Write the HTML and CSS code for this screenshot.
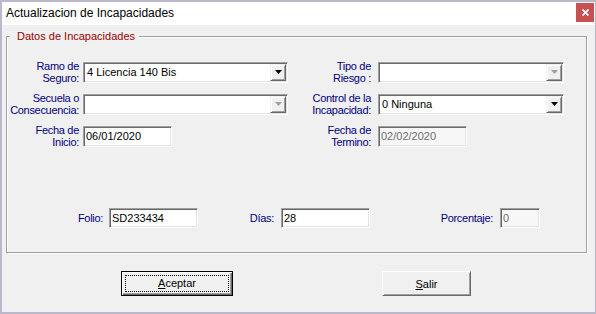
FILE: index.html
```html
<!DOCTYPE html>
<html lang="es">
<head>
    <meta charset="UTF-8">
    <title>Actualizacion de Incapacidades</title>
    <link rel="stylesheet" href="styles.css">
</head>
<body>
<div class="window">
    <div class="titlebar">
        <span class="title">Actualizacion de Incapacidades</span>
        <button class="close" type="button">
            <svg width="7" height="7" viewBox="0 0 7 7"><path d="M0.5 0.5L6.5 6.5M6.5 0.5L0.5 6.5" stroke="#fff" stroke-width="1.8"/></svg>
        </button>
    </div>
    <div class="client">
        <fieldset class="group">
            <legend>Datos de Incapacidades</legend>
            <div class="fields">
                <label class="lbl">Ramo de<br>Seguro:</label>
                <div class="combo">
                    <span class="combo-text">4 Licencia 140 Bis</span>
                    <span class="drop"><svg width="7" height="4" viewBox="0 0 7 4"><polygon points="0,0 7,0 3.5,4" fill="#000"/></svg></span>
                </div>
                <label class="lbl lbl-r">Tipo de<br>Riesgo :</label>
                <div class="combo disabled">
                    <span class="combo-text"></span>
                    <span class="drop"><svg width="7" height="4" viewBox="0 0 7 4"><polygon points="0,0 7,0 3.5,4" fill="#a0a0a0"/></svg></span>
                </div>

                <label class="lbl">Secuela o<br>Consecuencia:</label>
                <div class="combo disabled">
                    <span class="combo-text"></span>
                    <span class="drop"><svg width="7" height="4" viewBox="0 0 7 4"><polygon points="0,0 7,0 3.5,4" fill="#a0a0a0"/></svg></span>
                </div>
                <label class="lbl lbl-r">Control de la<br>Incapacidad:</label>
                <div class="combo">
                    <span class="combo-text">0 Ninguna</span>
                    <span class="drop"><svg width="7" height="4" viewBox="0 0 7 4"><polygon points="0,0 7,0 3.5,4" fill="#000"/></svg></span>
                </div>

                <label class="lbl">Fecha de<br>Inicio:</label>
                <input class="textbox" type="text" value="06/01/2020">
                <label class="lbl lbl-r">Fecha de<br>Termino:</label>
                <input class="textbox" type="text" value="02/02/2020" disabled>
            </div>
            <div class="totals">
                <label class="lbl lbl-folio">Folio:</label>
                <input class="textbox short" type="text" value="SD233434">
                <label class="lbl lbl-dias">Días:</label>
                <input class="textbox short" type="text" value="28">
                <label class="lbl lbl-pct">Porcentaje:</label>
                <input class="textbox short tiny" type="text" value="0" disabled>
            </div>
        </fieldset>
        <div class="actions">
            <button class="btn btn-default" type="button"><span class="focus"><u>A</u>ceptar</span></button>
            <button class="btn btn-salir" type="button"><u>S</u>alir</button>
        </div>
    </div>
</div>
</body>
</html>
```

FILE: styles.css
```css
*{
    margin:0;
    padding:0;
    box-sizing:border-box;
}
body{
    background:#fff;
    font-family:"Liberation Sans", Arial, sans-serif;
    font-size:11px;
}
.window{
    width:596px;
    height:314px;
    border:2px solid #bbb7cd;
    border-right-width:1px;
    background:#f0f0f0;
    display:flex;
    flex-direction:column;
}
.titlebar{
    height:23px;
    background:#fff;
    display:flex;
    align-items:flex-start;
}
.title{
    flex:1;
    font-size:12px;
    line-height:23px;
    padding-left:4px;
    color:#000;
}
.close{
    width:18px;
    height:19px;
    margin:1px 1px 0 0;
    border:0;
    background:#c75050;
    display:flex;
    align-items:center;
    justify-content:center;
}
.client{
    flex:1;
}

/* group box */
.group{
    margin:5px 8px 0 4px;
    border:1px solid #a0a0a0;
    box-shadow:1px 1px 0 #fff, inset 1px 1px 0 #fff;
    padding:17px 0 24px 0;
}
.group legend{
    margin-left:3px;
    padding:0 4px 0 7px;
    line-height:13px;
    font-size:11px;
    color:#990000;
    background:#f0f0f0;
}
.fields{
    display:grid;
    grid-template-columns:76px 205px 90px 186px;
    grid-auto-rows:24px;
    row-gap:8px;
}
.lbl{
    color:#000080;
    text-align:right;
    line-height:12px;
    letter-spacing:-0.3px;
    align-self:center;
    padding-right:4px;
}
.lbl-r{
    padding-right:7px;
}

/* combo box */
.combo{
    height:21px;
    align-self:center;
    display:flex;
    align-items:center;
    padding:1px 1px 1px 3px;
    background:#fff;
    border:1px solid;
    border-color:#a0a0a0 #fff #fff #a0a0a0;
    box-shadow:inset 1px 1px 0 #696969, inset -1px -1px 0 #e3e3e3;
}
.combo-text{
    flex:1;
    color:#000;
}
.drop{
    width:16px;
    height:17px;
    background:#f0f0f0;
    border:1px solid;
    border-color:#f0f0f0 #696969 #696969 #f0f0f0;
    box-shadow:inset 1px 1px 0 #fff, inset -1px -1px 0 #a0a0a0;
    display:flex;
    align-items:center;
    justify-content:center;
}

/* text box */
.textbox{
    width:89px;
    height:21px;
    align-self:center;
    justify-self:start;
    padding:0 2px;
    font:11px "Liberation Sans", Arial, sans-serif;
    color:#000;
    background:#fff;
    border:1px solid;
    border-color:#a0a0a0 #fff #fff #a0a0a0;
    box-shadow:inset 1px 1px 0 #696969, inset -1px -1px 0 #e3e3e3;
    outline:none;
}
.textbox:disabled{
    color:#6d6d6d;
    background:#f7f7f7;
}
.textbox.short{
    height:20px;
}
.textbox.tiny{
    width:40px;
}

.totals{
    margin-top:60px;
    height:20px;
    display:flex;
    align-items:center;
}
.lbl-folio{
    width:96px;
    margin-right:6px;
    padding-right:0;
}
.lbl-dias{
    width:76px;
    margin-right:7px;
    padding-right:0;
}
.lbl-pct{
    width:123px;
    margin-right:7px;
    padding-right:0;
}

/* buttons */
.actions{
    display:flex;
    gap:149px;
    padding:18px 0 0 119px;
}
.btn{
    height:25px;
    font:11px "Liberation Sans", Arial, sans-serif;
    color:#000;
    background:#f0f0f0;
    border:1px solid;
    border-color:#fff #696969 #696969 #fff;
    box-shadow:inset 1px 1px 0 #f0f0f0, inset -1px -1px 0 #a0a0a0;
}
.btn-default{
    width:112px;
    border-color:#000;
    box-shadow:inset 1px 1px 0 #fff, inset -1px -1px 0 #696969, inset -2px -2px 0 #a0a0a0;
}
.btn-salir{
    width:89px;
}
.focus{
    display:block;
    margin:0 3px;
    height:17px;
    line-height:15px;
    border:1px dotted #000;
}
```
